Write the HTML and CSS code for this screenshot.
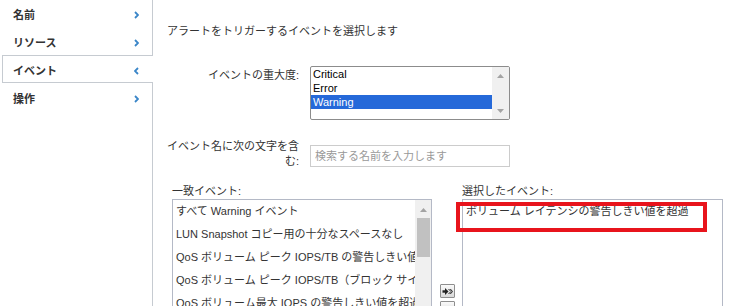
FILE: index.html
```html
<!DOCTYPE html>
<html lang="ja">
<head>
<meta charset="utf-8">
<link rel="stylesheet" href="styles.css">
</head>
<body>
<div class="page">
  <nav class="side">
    <div class="item first"><span>名前</span><svg class="chev" viewBox="0 0 5 8" width="5" height="8"><path d="M1 1l3 3-3 3" fill="none" stroke="#3a86c8" stroke-width="1.8"/></svg></div>
    <div class="item"><span>リソース</span><svg class="chev" viewBox="0 0 5 8" width="5" height="8"><path d="M1 1l3 3-3 3" fill="none" stroke="#3a86c8" stroke-width="1.8"/></svg></div>
    <div class="item active"><span>イベント</span><svg class="chev" viewBox="0 0 5 8" width="5" height="8"><path d="M4 1L1 4l3 3" fill="none" stroke="#3a86c8" stroke-width="1.8"/></svg></div>
    <div class="item"><span>操作</span><svg class="chev" viewBox="0 0 5 8" width="5" height="8"><path d="M1 1l3 3-3 3" fill="none" stroke="#3a86c8" stroke-width="1.8"/></svg></div>
    <div class="fill"></div>
  </nav>
  <main class="main">
    <p class="intro">アラートをトリガーするイベントを選択します</p>
    <div class="row sev">
      <label class="lbl">イベントの重大度:</label>
      <div class="listbox">
        <div class="opts">
          <div class="opt">Critical</div>
          <div class="opt">Error</div>
          <div class="opt on">Warning</div>
        </div>
        <div class="lsb">
          <svg viewBox="0 0 7 4" width="7" height="4"><path d="M0 4L3.5 0 7 4z" fill="#a3a3a3"/></svg>
          <svg viewBox="0 0 7 4" width="7" height="4"><path d="M0 0h7L3.5 4z" fill="#a3a3a3"/></svg>
        </div>
      </div>
    </div>
    <div class="row name">
      <label class="lbl">イベント名に次の文字を含<br>む:</label>
      <input class="search" type="text" placeholder="検索する名前を入力します">
    </div>
    <div class="pick">
      <div class="col match">
        <div class="cap">一致イベント:</div>
        <div class="box">
          <div class="mitems">
            <div class="mi">すべて Warning イベント</div>
            <div class="mi">LUN Snapshot コピー用の十分なスペースなし</div>
            <div class="mi">QoS ボリューム ピーク IOPS/TB の警告しきい値を超過</div>
            <div class="mi">QoS ボリューム ピーク IOPS/TB（ブロック サイズ）</div>
            <div class="mi">QoS ボリューム最大 IOPS の警告しきい値を超過</div>
          </div>
          <div class="msb">
            <svg class="up" viewBox="0 0 7 4" width="7" height="4"><path d="M0 4L3.5 0 7 4z" fill="#a3a3a3"/></svg>
            <div class="thumb"></div>
          </div>
        </div>
      </div>
      <div class="btns">
        <button class="mv" type="button"><svg viewBox="0 0 11 9" width="11" height="9"><path d="M0.5 4.5h4" stroke="#222" stroke-width="2.4"/><path d="M3 1l3.5 3.5L3 8z" fill="#222"/><path d="M6.5 2l2.5 2.5-2.5 2.5M8.3 2l2.3 2.5-2.3 2.5" fill="none" stroke="#222" stroke-width="1"/></svg></button>
        <button class="mv" type="button"></button>
      </div>
      <div class="col sel">
        <div class="cap">選択したイベント:</div>
        <div class="box selbox">
          <div class="mi">ボリューム レイテンシの警告しきい値を超過</div>
          <div class="mark"></div>
        </div>
      </div>
    </div>
  </main>
</div>
</body>
</html>
```

FILE: styles.css
```css
* { box-sizing: border-box; }
html, body { margin: 0; padding: 0; }
body {
  width: 735px;
  height: 306px;
  overflow: hidden;
  background: #fff;
  font-family: "Liberation Sans", "Noto Sans CJK JP", Arial, sans-serif;
  font-size: 11px;
  color: #333;
}
.page { display: flex; height: 306px; }

.side { width: 153px; flex: none; display: flex; flex-direction: column; }
.item {
  height: 28px;
  display: flex;
  justify-content: space-between;
  align-items: flex-start;
  padding: 8px 13px 0 13px;
  line-height: 16px;
  font-weight: bold;
  color: #333;
  border-right: 1px solid #c6cbd1;
}
.item.first { height: 27px; padding-top: 7px; }
.item.active {
  border: 1px solid #c6cbd1;
  border-right: none;
  margin-left: 2px;
  padding: 7px 14px 0 10px;
}
.chev { margin-top: 4px; }
.fill { flex: 1; border-right: 1px solid #c6cbd1; }

.main { flex: 1; padding: 23px 0 0 14px; }
.intro { margin: 0; line-height: 16px; }

.row { display: grid; grid-template-columns: 132px 200px; column-gap: 11px; align-items: start; }
.lbl { text-align: right; }
.sev { margin-top: 27px; }
.sev .lbl { padding-top: 1px; line-height: 16px; }
.listbox {
  height: 54px;
  border: 1px solid #8c8c8c;
  border-radius: 2px;
  display: flex;
  overflow: hidden;
}
.opts { flex: 1; }
.opt { height: 14px; line-height: 14px; padding-left: 2px; color: #000; }
.opt.on { background: #2569d9; color: #fff; }
.lsb {
  width: 17px;
  background: #f0f0f0;
  display: flex;
  flex-direction: column;
  justify-content: space-between;
  align-items: center;
  padding: 7px 0 6px;
}
.lsb svg { display: block; }

.name { margin-top: 19px; }
.name .lbl { line-height: 15px; }
.search {
  margin: 6px 0 0;
  height: 22px;
  width: 200px;
  border: 1px solid #ccc;
  padding: 0 4px;
  font: inherit;
  color: #333;
  outline: none;
}
.search::placeholder { color: #999; }

.pick { display: flex; align-items: flex-start; margin-top: 14px; padding-left: 5px; }
.cap { line-height: 16px; }
.col { flex: none; }
.match { width: 260px; }
.box { height: 130px; border: 1px solid #b4b9c6; }
.match .box { display: flex; }
.mitems { flex: 1; overflow: hidden; }
.mi { height: 23px; line-height: 23px; padding-left: 3px; white-space: nowrap; }
.msb {
  width: 16px;
  flex: none;
  background: #f0f0f0;
  display: flex;
  flex-direction: column;
  align-items: center;
  padding-top: 8px;
}
.msb .up { display: block; }
.thumb { width: 13px; height: 39px; margin-top: 6px; background: #c1c1c1; }

.btns { width: 15px; margin-left: 8px; padding-top: 101px; display: flex; flex-direction: column; gap: 3px; }
.mv {
  width: 15px;
  height: 14px;
  padding: 0;
  border: 1px solid #8e8e8e;
  border-radius: 1px;
  background: linear-gradient(#fafafa, #d9d9d9);
  display: flex;
  align-items: center;
  justify-content: center;
}
.mv svg { display: block; }

.sel { width: 261px; margin-left: 7px; }
.selbox { position: relative; }
.selbox .mi { color: #333; }
.mark {
  position: absolute;
  left: -7px;
  top: 2px;
  width: 251px;
  height: 30px;
  border: 4px solid #e8141c;
}
```
